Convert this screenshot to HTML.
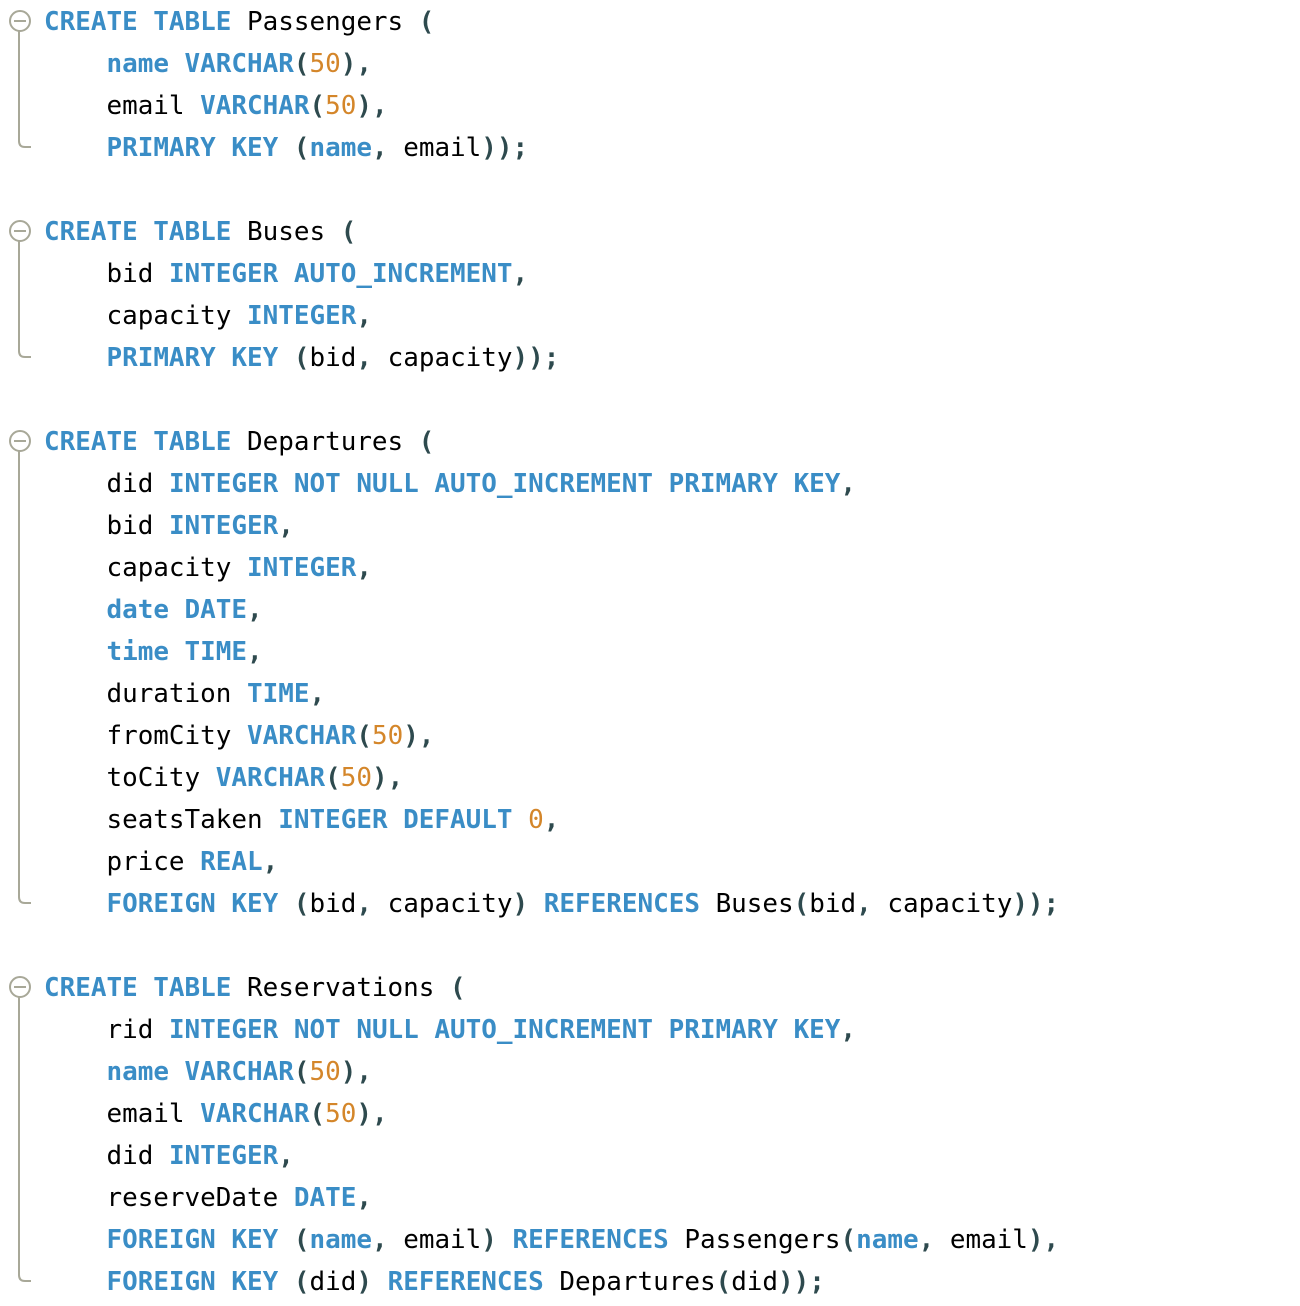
<!DOCTYPE html>
<html><head><meta charset="utf-8"><style>
html,body{margin:0;padding:0;background:#fff;width:1300px;height:1306px;overflow:hidden}
pre{position:absolute;left:44px;top:1px;margin:0;font-family:"DejaVu Sans Mono","Liberation Mono",monospace;font-size:25.95px;line-height:42px;color:#000}
.k{color:#3a8dc6;font-weight:bold}
.n{color:#d4862a}
.p{color:#2e4a4e;font-weight:bold}
svg{position:absolute;left:0;top:0}
</style></head><body>
<svg width="60" height="1306" fill="none" stroke="#a8a898" stroke-width="2">
<g><circle cx="20" cy="21" r="10" fill="#fff"/><line x1="14" y1="21" x2="26" y2="21"/><path d="M19 31 V141 Q19 147 25 147 H31"/></g>
<g><circle cx="20" cy="231" r="10" fill="#fff"/><line x1="14" y1="231" x2="26" y2="231"/><path d="M19 241 V351 Q19 357 25 357 H31"/></g>
<g><circle cx="20" cy="441" r="10" fill="#fff"/><line x1="14" y1="441" x2="26" y2="441"/><path d="M19 451 V897 Q19 903 25 903 H31"/></g>
<g><circle cx="20" cy="987" r="10" fill="#fff"/><line x1="14" y1="987" x2="26" y2="987"/><path d="M19 997 V1275 Q19 1281 25 1281 H31"/></g>
</svg>
<pre><span class="k">CREATE TABLE</span> Passengers <span class="p">(</span>
    <span class="k">name VARCHAR</span><span class="p">(</span><span class="n">50</span><span class="p">),</span>
    email <span class="k">VARCHAR</span><span class="p">(</span><span class="n">50</span><span class="p">),</span>
    <span class="k">PRIMARY KEY</span> <span class="p">(</span><span class="k">name</span><span class="p">,</span> email<span class="p">));</span>

<span class="k">CREATE TABLE</span> Buses <span class="p">(</span>
    bid <span class="k">INTEGER AUTO_INCREMENT</span><span class="p">,</span>
    capacity <span class="k">INTEGER</span><span class="p">,</span>
    <span class="k">PRIMARY KEY</span> <span class="p">(</span>bid<span class="p">,</span> capacity<span class="p">));</span>

<span class="k">CREATE TABLE</span> Departures <span class="p">(</span>
    did <span class="k">INTEGER NOT NULL AUTO_INCREMENT PRIMARY KEY</span><span class="p">,</span>
    bid <span class="k">INTEGER</span><span class="p">,</span>
    capacity <span class="k">INTEGER</span><span class="p">,</span>
    <span class="k">date DATE</span><span class="p">,</span>
    <span class="k">time TIME</span><span class="p">,</span>
    duration <span class="k">TIME</span><span class="p">,</span>
    fromCity <span class="k">VARCHAR</span><span class="p">(</span><span class="n">50</span><span class="p">),</span>
    toCity <span class="k">VARCHAR</span><span class="p">(</span><span class="n">50</span><span class="p">),</span>
    seatsTaken <span class="k">INTEGER DEFAULT</span> <span class="n">0</span><span class="p">,</span>
    price <span class="k">REAL</span><span class="p">,</span>
    <span class="k">FOREIGN KEY</span> <span class="p">(</span>bid<span class="p">,</span> capacity<span class="p">)</span> <span class="k">REFERENCES</span> Buses<span class="p">(</span>bid<span class="p">,</span> capacity<span class="p">));</span>

<span class="k">CREATE TABLE</span> Reservations <span class="p">(</span>
    rid <span class="k">INTEGER NOT NULL AUTO_INCREMENT PRIMARY KEY</span><span class="p">,</span>
    <span class="k">name VARCHAR</span><span class="p">(</span><span class="n">50</span><span class="p">),</span>
    email <span class="k">VARCHAR</span><span class="p">(</span><span class="n">50</span><span class="p">),</span>
    did <span class="k">INTEGER</span><span class="p">,</span>
    reserveDate <span class="k">DATE</span><span class="p">,</span>
    <span class="k">FOREIGN KEY</span> <span class="p">(</span><span class="k">name</span><span class="p">,</span> email<span class="p">)</span> <span class="k">REFERENCES</span> Passengers<span class="p">(</span><span class="k">name</span><span class="p">,</span> email<span class="p">),</span>
    <span class="k">FOREIGN KEY</span> <span class="p">(</span>did<span class="p">)</span> <span class="k">REFERENCES</span> Departures<span class="p">(</span>did<span class="p">));</span></pre>
</body></html>
